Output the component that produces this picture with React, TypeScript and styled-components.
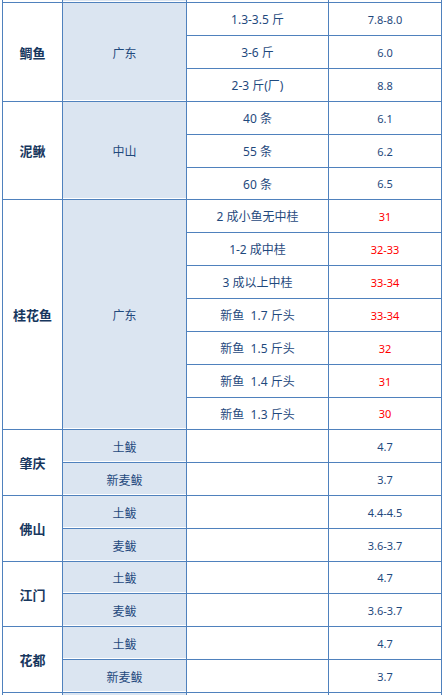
import * as React from 'react';
import styled, { createGlobalStyle } from 'styled-components';

const LINE = '#4F81BD';
const SHADE = '#DBE5F1';
const INK = '#1F497D';

interface Row {
  region?: string;
  spec?: string;
  price: string;
  hot?: boolean;
  short?: boolean; // a few rows in the shot are 32px instead of 33px
}

interface Group {
  name: string;
  region?: string;
  rows: Row[];
}

// First and last groups are only partly in frame.
const GROUPS: Group[] = [
  { name: '', region: '', rows: [{ price: '' }] },
  {
    name: '鲷鱼',
    region: '广东',
    rows: [
      { spec: '1.3-3.5 斤', price: '7.8-8.0' },
      { spec: '3-6 斤', price: '6.0' },
      { spec: '2-3 斤(厂)', price: '8.8' },
    ],
  },
  {
    name: '泥鳅',
    region: '中山',
    rows: [
      { spec: '40 条', price: '6.1' },
      { spec: '55 条', price: '6.2' },
      { spec: '60 条', price: '6.5', short: true },
    ],
  },
  {
    name: '桂花鱼',
    region: '广东',
    rows: [
      { spec: '2 成小鱼无中桂', price: '31', hot: true },
      { spec: '1-2 成中桂', price: '32-33', hot: true },
      { spec: '3 成以上中桂', price: '33-34', hot: true },
      { spec: '新鱼  1.7 斤头', price: '33-34', hot: true },
      { spec: '新鱼  1.5 斤头', price: '32', hot: true },
      { spec: '新鱼  1.4 斤头', price: '31', hot: true },
      { spec: '新鱼  1.3 斤头', price: '30', hot: true, short: true },
    ],
  },
  {
    name: '肇庆',
    rows: [
      { region: '土鲅', price: '4.7' },
      { region: '新麦鲅', price: '3.7' },
    ],
  },
  {
    name: '佛山',
    rows: [
      { region: '土鲅', price: '4.4-4.5' },
      { region: '麦鲅', price: '3.6-3.7' },
    ],
  },
  {
    name: '江门',
    rows: [
      { region: '土鲅', price: '4.7', short: true },
      { region: '麦鲅', price: '3.6-3.7' },
    ],
  },
  {
    name: '花都',
    rows: [
      { region: '土鲅', price: '4.7' },
      { region: '新麦鲅', price: '3.7' },
    ],
  },
  { name: '', rows: [{ region: '', price: '' }] },
];

const ROW_TRACKS = GROUPS.flatMap((g) => g.rows.map((r) => (r.short ? '31px' : '32px'))).join(' ');

const GlobalStyle = createGlobalStyle`
  html, body {
    margin: 0;
    padding: 0;
    background: #fff;
    overflow: hidden;
  }
  body {
    font-family: "Noto Sans", "Noto Sans CJK SC", sans-serif;
  }
`;

const Page = styled.div`
  width: 444px;
  height: 695px;
  overflow: hidden;
  padding-left: 2px;
  box-sizing: border-box;
`;

const Sheet = styled.div<{ $tracks: string }>`
  display: grid;
  grid-template-columns: 59px 123px 141px 112px;
  grid-template-rows: ${(p) => p.$tracks};
  gap: 1px;
  padding: 1px;
  width: 440px;
  box-sizing: border-box;
  background: ${LINE};
  margin-top: -31px;
`;

const Cell = styled.div<{ $rows?: number }>`
  grid-row: span ${(p) => p.$rows ?? 1};
  display: flex;
  align-items: center;
  justify-content: center;
  background: #fff;
  color: ${INK};
  font-size: 12px;
  white-space: pre;
`;

const NameCell = styled(Cell)`
  font-family: "Noto Sans CJK SC", sans-serif;
  font-weight: 700;
  font-size: 13px;
  color: #17375E;
`;

const RegionCell = styled(Cell)`
  font-family: "Noto Sans CJK SC", sans-serif;
  background: ${SHADE};
  box-shadow: inset 0 -1px 0 #fff;
`;

const SpecCell = styled(Cell)``;

const PriceCell = styled(Cell)<{ $hot?: boolean }>`
  font-size: 11px;
  color: ${(p) => (p.$hot ? '#FF0000' : INK)};
`;

const App: React.FC = () => (
  <>
    <GlobalStyle />
    <Page>
      <Sheet $tracks={ROW_TRACKS}>
        {GROUPS.map((g, gi) =>
          g.rows.map((r, ri) => (
            <React.Fragment key={`${gi}-${ri}`}>
              {ri === 0 && <NameCell $rows={g.rows.length}>{g.name}</NameCell>}
              {g.region !== undefined
                ? ri === 0 && <RegionCell $rows={g.rows.length}>{g.region}</RegionCell>
                : <RegionCell>{r.region}</RegionCell>}
              <SpecCell>{r.spec ?? ''}</SpecCell>
              <PriceCell $hot={r.hot}>{r.price}</PriceCell>
            </React.Fragment>
          ))
        )}
      </Sheet>
    </Page>
  </>
);

export default App;
